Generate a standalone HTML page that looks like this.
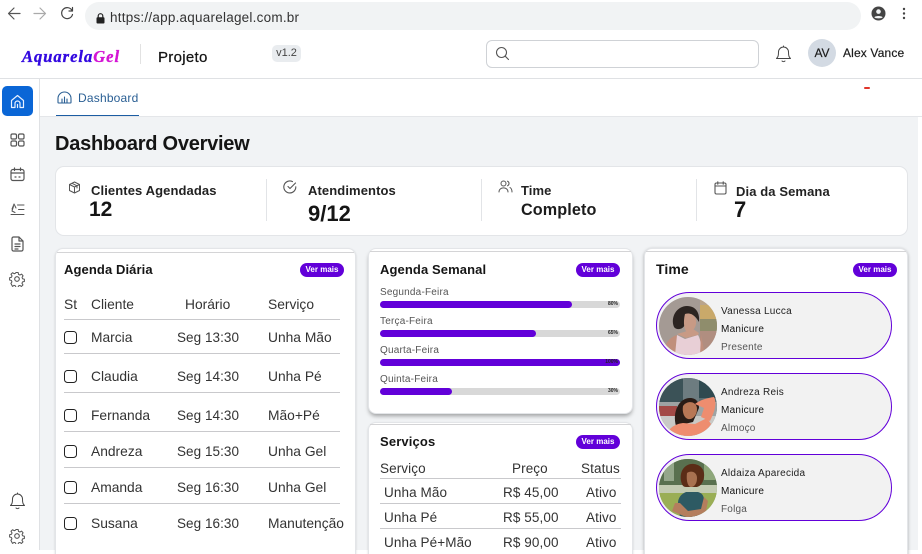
<!DOCTYPE html>
<html lang="pt-BR"><head><meta charset="utf-8"><title>Dashboard</title>
<style>
*{box-sizing:border-box;margin:0;padding:0}
html,body{width:922px;height:554px;overflow:hidden;background:#fff}
body{position:relative;font-family:"Liberation Sans",sans-serif;color:#222}
.a{position:absolute}
.t{position:absolute;white-space:nowrap;line-height:16px;height:16px}
.main{position:absolute;left:40px;top:117px;width:878px;height:433px;background:#f1f3f5}
.card{position:absolute;background:#fff;border:1px solid #e3e5e8;border-radius:8px}
.ln{position:absolute;height:1px;background:#c9c9cc}
.pill{position:absolute;width:44px;height:14px;border-radius:7px;background:#6200d9;color:#fff;font-size:8px;font-weight:bold;line-height:14px;text-align:center}
.h{font-weight:bold;font-size:13px;color:#151515;letter-spacing:.1px}
.r{font-size:13.8px;color:#333;margin-top:1px}
.g{font-size:13.5px;letter-spacing:.05px;color:#333;margin-top:1px}
.s{font-size:13.5px;color:#333;letter-spacing:.1px}
.cb{position:absolute;left:64px;width:13px;height:13px;border:1.4px solid #222;border-radius:3.5px;background:#fff}
.lab{font-size:10px;color:#555;letter-spacing:.2px}
.bar{position:absolute;left:380px;width:240px;height:7px;border-radius:4px;background:#d8d8d8}
.bar i{display:block;height:7px;border-radius:4px;background:#6200d9}
.pc{position:absolute;font-size:5px;font-weight:bold;color:#222;line-height:7px;right:2px;top:0}
.tm{position:absolute;left:656px;width:236px;height:67px;border:1.4px solid #6200d9;border-radius:34px;background:#f2f2f2}
.av{position:absolute;left:659px;width:58px;height:58px;border-radius:50%;overflow:hidden}
.av svg{display:block}
.n{font-size:10px;color:#222;letter-spacing:.25px}
.p{font-size:10px;color:#555;letter-spacing:.2px}
.k{font-size:13px;font-weight:bold;color:#222;letter-spacing:.1px}
.v{font-size:20px;font-weight:bold;color:#151515}
svg.i{position:absolute;fill:none;stroke:#555;stroke-width:1.200;stroke-linecap:round;stroke-linejoin:round}
</style></head><body>

<!-- browser bar -->
<div class="a" style="left:85px;top:2px;width:776px;height:28px;background:#f1f3f4;border-radius:14px"></div>
<svg class="i" style="left:7px;top:7px;stroke:#555" width="14" height="13" viewBox="0 0 14 13"><path d="M13 6.500H2M7 1L1.500 6.500 7 12"/></svg>
<svg class="i" style="left:33px;top:7px;stroke:#aaa" width="14" height="13" viewBox="0 0 14 13"><path d="M1 6.500H12M7 1l5.500 5.500L7 12"/></svg>
<svg class="i" style="left:60px;top:6px;stroke:#444" width="14" height="14" viewBox="0 0 14 14"><path d="M12 4.500A5.500 5.500 0 1 0 12.500 8.500M12.500 1.500v3.500H9"/></svg>
<svg class="a" style="left:96px;top:13px" width="9" height="11" viewBox="0 0 9 11"><path d="M2.200 4.500V3a2.300 2.300 0 0 1 4.600 0v1.500" fill="none" stroke="#222" stroke-width="1.200"/><rect x="0.500" y="4.300" width="8" height="6.200" rx="1" fill="#222"/></svg>
<div class="t" style="left:110px;top:10px;font-size:13.5px;color:#333;letter-spacing:.23px">https://app.aquarelagel.com.br</div>
<svg class="a" style="left:871px;top:6px" width="15" height="15" viewBox="0 0 15 15"><circle cx="7.500" cy="7.500" r="7" fill="#444"/><circle cx="7.500" cy="5.600" r="2.300" fill="#f1f3f4"/><path d="M3.300 11.300c1-1.800 7.400-1.800 8.400 0-1 1.500-7.400 1.500-8.400 0z" fill="#f1f3f4"/></svg>
<svg class="a" style="left:902px;top:7px" width="4" height="13" viewBox="0 0 4 13"><circle cx="2" cy="2" r="1.200" fill="#444"/><circle cx="2" cy="6.500" r="1.200" fill="#444"/><circle cx="2" cy="11" r="1.200" fill="#444"/></svg>

<!-- header -->
<div class="t" style="left:22px;top:49px;font:italic bold 16.500px/16px 'Liberation Serif',serif;letter-spacing:1px;color:#3208e0;-webkit-text-stroke:.35px #3208e0">Aquarela<span style="color:#d414d4;-webkit-text-stroke:.35px #d414d4">Gel</span></div>
<div class="a" style="left:140px;top:44px;width:1px;height:20px;background:#e2e2e2"></div>
<div class="t" style="left:158px;top:50px;font-size:15px;color:#151515;letter-spacing:.3px;-webkit-text-stroke:.25px #151515">Projeto</div>
<div class="a" style="left:272px;top:45px;width:29px;height:17px;background:#e9ecef;border-radius:5px;font-size:11px;line-height:16px;text-align:center;color:#444">v1.2</div>
<div class="a" style="left:486px;top:40px;width:273px;height:28px;border:1px solid #cfd2d6;border-radius:6px;background:#fff"></div>
<svg class="i" style="left:495px;top:46px;stroke:#555;stroke-width:1.100" width="15" height="15" viewBox="0 0 15 15"><circle cx="6.500" cy="6.500" r="5"/><path d="M10.200 10.200L13.500 13.500"/></svg>
<svg class="i" style="left:775px;top:45px;stroke:#444;stroke-width:1" width="17" height="18" viewBox="0 0 17 18"><path d="M1.500 13.500h14c-1.500-1.500-2-2.500-2-6.500a5 5 0 0 0-10 0c0 4-.5 5-2 6.500zM7 16c.8.800 2.200.800 3 0M8.500 2V1"/></svg>
<div class="a" style="left:808px;top:39px;width:28px;height:28px;border-radius:50%;background:#d3dae3;font-size:12px;line-height:28px;text-align:center;color:#1c1c1c;-webkit-text-stroke:.2px #1c1c1c">AV</div>
<div class="t" style="left:843px;top:45px;font-size:12px;color:#1c1c1c;letter-spacing:.15px;-webkit-text-stroke:.2px #1c1c1c">Alex Vance</div>
<div class="a" style="left:0;top:78px;width:922px;height:1px;background:#dfe1e4"></div>

<!-- sidebar -->
<div class="a" style="left:39px;top:79px;width:1px;height:471px;background:#dfe1e4"></div>
<div class="a" style="left:2px;top:86px;width:31px;height:30px;background:#0a66d6;border-radius:5px"></div>
<svg class="i" style="left:10px;top:94px;stroke:#e6f0ff" width="15" height="15" viewBox="0 0 15 15"><path d="M1.500 6.500L7.500 1.500l6 5v7h-3.500V9.500a2.500 2.500 0 0 0-5 0v4H1.500z"/><path d="M7.500 10.500v3"/></svg>
<svg class="i" style="left:10px;top:133px" width="15" height="14" viewBox="0 0 15 14"><rect x="1" y="1" width="5.500" height="5" rx="1.400"/><rect x="8.500" y="1" width="5.500" height="5" rx="1.400"/><rect x="1" y="8" width="5.500" height="5" rx="1.400"/><rect x="8.500" y="8" width="5.500" height="5" rx="1.400"/></svg>
<svg class="i" style="left:10px;top:167px" width="15" height="15" viewBox="0 0 15 15"><rect x="1" y="2.500" width="13" height="11" rx="2"/><path d="M1 6h13M4.500 1v2.500M10.500 1v2.500M5 10h1M9 10h1"/></svg>
<svg class="i" style="left:10px;top:202px;stroke-width:1" width="15" height="14" viewBox="0 0 15 14"><path d="M7.500 3h6.500M8.500 7.500h5.500M1 12.500h13M2 7l2-5 2 4M3.500 4.500L2 9l3 1.500"/></svg>
<svg class="i" style="left:11px;top:236px" width="13" height="16" viewBox="0 0 13 16"><path d="M1 2.500A1.500 1.500 0 0 1 2.500 1H8l4 4v8.500a1.500 1.500 0 0 1-1.500 1.500h-8A1.500 1.500 0 0 1 1 13.500zM8 1v4h4M4 8h5M4 10.500h5M4 13h3"/></svg>
<svg class="i" style="left:9px;top:271px;stroke-width:1.100" width="16" height="16" viewBox="0 0 16 16"><circle cx="8" cy="8" r="2.300"/><path d="M6.800 1h2.400l.4 2 1.500.7 1.800-1 1.600 1.800-1.100 1.700.5 1.500 2 .5v2.400l-2 .5-.6 1.500 1.100 1.700-1.700 1.700-1.700-1.100-1.500.6-.5 1.900H6.800l-.4-2-1.500-.6-1.800 1.100L1.400 12.700l1.100-1.700-.6-1.500-1.900-.5V6.600l2-.5.6-1.500-1.100-1.700L3.200 1.200 4.900 2.300l1.500-.6z" transform="translate(.6 .6) scale(.93)"/></svg>
<svg class="i" style="left:9px;top:492px;stroke:#444;stroke-width:1" width="17" height="18" viewBox="0 0 17 18"><path d="M1.500 13.500h14c-1.500-1.500-2-2.500-2-6.500a5 5 0 0 0-10 0c0 4-.5 5-2 6.500zM7 16c.8.800 2.200.800 3 0M8.500 2V1"/></svg>
<svg class="i" style="left:9px;top:528px;stroke-width:1.100" width="16" height="16" viewBox="0 0 16 16"><circle cx="8" cy="8" r="2.300"/><path d="M6.800 1h2.400l.4 2 1.500.7 1.800-1 1.600 1.800-1.100 1.700.5 1.500 2 .5v2.400l-2 .5-.6 1.500 1.100 1.700-1.700 1.700-1.700-1.100-1.500.6-.5 1.900H6.800l-.4-2-1.500-.6-1.800 1.100L1.400 12.700l1.100-1.700-.6-1.500-1.900-.5V6.600l2-.5.6-1.500-1.100-1.700L3.200 1.200 4.900 2.300l1.500-.6z" transform="translate(.6 .6) scale(.93)"/></svg>

<!-- tabs -->
<svg class="i" style="left:57px;top:91px;stroke:#2a5f94;stroke-width:1.100" width="15" height="13" viewBox="0 0 15 13"><path d="M1 11.500V7.500a6.500 6.500 0 0 1 13 0v4a.5.5 0 0 1-.5.500h-12a.5.5 0 0 1-.5-.500zM5 12V8M7.500 12V6M10 12V8"/></svg>
<div class="t" style="left:78px;top:90px;font-size:12px;color:#2a5f94;letter-spacing:.2px">Dashboard</div>
<div class="a" style="left:56px;top:115px;width:83px;height:2px;background:#1c5da3"></div>

<!-- main -->
<div class="main"></div>
<div class="a" style="left:40px;top:116px;width:882px;height:1px;background:#e4e6e9"></div>
<div class="t" style="left:55px;top:132px;height:24px;line-height:24px;font-size:20px;font-weight:bold;color:#151515;letter-spacing:-.25px">Dashboard Overview</div>

<!-- KPI -->
<div class="card" style="left:55px;top:166px;width:853px;height:70px;border-radius:9px"></div>
<div class="a" style="left:266px;top:179px;width:1px;height:42px;background:#e2e4e7"></div>
<div class="a" style="left:481px;top:179px;width:1px;height:42px;background:#e2e4e7"></div>
<div class="a" style="left:696px;top:179px;width:1px;height:42px;background:#e2e4e7"></div>
<svg class="i" style="left:68px;top:181px;stroke-width:1" width="13" height="13" viewBox="0 0 13 13"><path d="M6.500 1L11.500 3.500v6L6.500 12 1.500 9.500v-6zM1.500 3.500L6.500 6l5-2.500M6.500 6v6M4 2.300l5 2.500V7"/></svg>
<div class="t k" style="left:91px;top:183px">Clientes Agendadas</div>
<div class="t v" style="left:89px;top:201px;height:18px;line-height:18px;font-size:21px">12</div>
<svg class="i" style="left:283px;top:180px;stroke-width:1.100" width="14" height="14" viewBox="0 0 14 14"><path d="M12.800 6.800A6 6 0 1 1 9.500 1.600M5 6.500l2 2 5.500-5.500"/></svg>
<div class="t k" style="left:308px;top:183px">Atendimentos</div>
<div class="t v" style="left:308px;top:205px;height:18px;line-height:18px;font-size:22px">9/12</div>
<svg class="i" style="left:498px;top:180px;stroke-width:1" width="15" height="13" viewBox="0 0 15 13"><circle cx="5.500" cy="3.500" r="2.500"/><path d="M1 12c0-5.500 9-5.500 9 0M9.500 1.200a2.500 2.500 0 0 1 0 4.600M12 7.500c1.300.8 2 2.500 2 4.500"/></svg>
<div class="t k" style="left:521px;top:183px">Time</div>
<div class="t" style="left:521px;top:201px;height:18px;line-height:18px;font-size:16.200px;font-weight:bold;color:#1c1c1c;letter-spacing:.1px">Completo</div>
<svg class="i" style="left:714px;top:181px;stroke-width:1.100" width="13" height="14" viewBox="0 0 13 14"><rect x="1" y="2" width="11" height="11" rx="1.500"/><path d="M1 5h11M3.800 .8v2.400M9.200 .8v2.400"/></svg>
<div class="t k" style="left:736px;top:184px">Dia da Semana</div>
<div class="t v" style="left:734px;top:201px;height:18px;line-height:18px;font-size:22px">7</div>

<!-- Agenda Diaria -->
<div class="card" style="left:55px;top:248px;width:301px;height:320px;box-shadow:0 1px 2px rgba(0,0,0,.15)"></div>
<div class="ln" style="left:57px;top:252px;width:297px;background:#d4d4d6"></div>
<div class="t h" style="left:64px;top:262px">Agenda Diária</div>
<div class="pill" style="left:300px;top:263px">Ver mais</div>
<div class="t r" style="left:64px;top:296px">St</div>
<div class="t r" style="left:91px;top:296px">Cliente</div>
<div class="t r" style="left:185px;top:296px">Horário</div>
<div class="t r" style="left:268px;top:296px">Serviço</div>
<div class="ln" style="left:64px;top:319px;width:276px"></div>
<div class="cb" style="top:331px"></div><div class="t r" style="left:91px;top:329px">Marcia</div><div class="t g" style="left:177px;top:329px">Seg 13:30</div><div class="t r" style="left:268px;top:329px">Unha Mão</div>
<div class="ln" style="left:64px;top:353px;width:276px"></div>
<div class="cb" style="top:370px"></div><div class="t r" style="left:91px;top:368px">Claudia</div><div class="t g" style="left:177px;top:368px">Seg 14:30</div><div class="t r" style="left:268px;top:368px">Unha Pé</div>
<div class="ln" style="left:64px;top:392px;width:276px"></div>
<div class="cb" style="top:409px"></div><div class="t r" style="left:91px;top:407px">Fernanda</div><div class="t g" style="left:177px;top:407px">Seg 14:30</div><div class="t r" style="left:268px;top:407px">Mão+Pé</div>
<div class="ln" style="left:64px;top:431px;width:276px"></div>
<div class="cb" style="top:445px"></div><div class="t r" style="left:91px;top:443px">Andreza</div><div class="t g" style="left:177px;top:443px">Seg 15:30</div><div class="t r" style="left:268px;top:443px">Unha Gel</div>
<div class="ln" style="left:64px;top:467px;width:276px"></div>
<div class="cb" style="top:481px"></div><div class="t r" style="left:91px;top:479px">Amanda</div><div class="t g" style="left:177px;top:479px">Seg 16:30</div><div class="t r" style="left:268px;top:479px">Unha Gel</div>
<div class="ln" style="left:64px;top:503px;width:276px"></div>
<div class="cb" style="top:517px"></div><div class="t r" style="left:91px;top:515px">Susana</div><div class="t g" style="left:177px;top:515px">Seg 16:30</div><div class="t r" style="left:268px;top:515px">Manutenção</div>

<!-- Agenda Semanal -->
<div class="card" style="left:368px;top:248px;width:265px;height:166px;box-shadow:0 3px 4px -1px rgba(0,0,0,.35)"></div>
<div class="ln" style="left:370px;top:251px;width:261px;background:#d4d4d6"></div>
<div class="t h" style="left:380px;top:262px">Agenda Semanal</div>
<div class="pill" style="left:576px;top:263px">Ver mais</div>
<div class="t lab" style="left:380px;top:285px">Segunda-Feira</div>
<div class="bar" style="top:301px"><i style="width:192px"></i><span class="pc">80%</span></div>
<div class="t lab" style="left:380px;top:314px">Terça-Feira</div>
<div class="bar" style="top:330px"><i style="width:156px"></i><span class="pc">65%</span></div>
<div class="t lab" style="left:380px;top:343px">Quarta-Feira</div>
<div class="bar" style="top:359px"><i style="width:240px"></i><span class="pc">100%</span></div>
<div class="t lab" style="left:380px;top:372px">Quinta-Feira</div>
<div class="bar" style="top:388px"><i style="width:72px"></i><span class="pc">30%</span></div>

<!-- Servicos -->
<div class="card" style="left:368px;top:422px;width:265px;height:150px;box-shadow:0 1px 2px rgba(0,0,0,.15)"></div>
<div class="ln" style="left:370px;top:424px;width:261px;background:#d4d4d6"></div>
<div class="t h" style="left:380px;top:434px;letter-spacing:.15px">Serviços</div>
<div class="pill" style="left:576px;top:435px">Ver mais</div>
<div class="t s" style="left:380px;top:461px">Serviço</div><div class="t s" style="left:512px;top:461px">Preço</div><div class="t s" style="left:581px;top:461px">Status</div>
<div class="ln" style="left:380px;top:478px;width:241px"></div>
<div class="t s" style="left:384px;top:485px">Unha Mão</div><div class="t s" style="left:503px;top:485px">R$ 45,00</div><div class="t s" style="left:586px;top:485px">Ativo</div>
<div class="ln" style="left:380px;top:503px;width:241px"></div>
<div class="t s" style="left:384px;top:510px">Unha Pé</div><div class="t s" style="left:503px;top:510px">R$ 55,00</div><div class="t s" style="left:586px;top:510px">Ativo</div>
<div class="ln" style="left:380px;top:528px;width:241px"></div>
<div class="t s" style="left:384px;top:535px">Unha Pé+Mão</div><div class="t s" style="left:503px;top:535px">R$ 90,00</div><div class="t s" style="left:586px;top:535px">Ativo</div>

<!-- Time -->
<div class="card" style="left:644px;top:248px;width:264px;height:320px;box-shadow:0 1px 3px rgba(0,0,0,.3)"></div>
<div class="ln" style="left:646px;top:251px;width:260px;background:#d4d4d6"></div>
<div class="t h" style="left:656px;top:261px;font-size:14px;font-weight:bold;letter-spacing:.1px">Time</div>
<div class="pill" style="left:853px;top:263px">Ver mais</div>

<div class="tm" style="top:292px"></div>
<div class="av" style="top:297px"><svg width="58" height="58" viewBox="0 0 58 58"><rect width="58" height="58" fill="#a49a94"/><rect x="41" width="17" height="58" fill="#b9a48c"/><rect x="41" y="8" width="17" height="14" fill="#c9a96a"/><rect x="41" y="22" width="17" height="12" fill="#8f8d6c"/><rect x="41" y="34" width="17" height="24" fill="#b08e80"/><path d="M15 30C11 20 18 9 28 9c9 0 13 7 12 16-3-5-6-8-10-8-3 2-4 5-4 10-1 5-8 7-11 3z" fill="#2c2421"/><path d="M26 17c7-2 12 3 11 10-1 6-6 9-9 8-3-2-4-10-2-18z" fill="#c89a85"/><path d="M14 58c-1-10 1-16 4-20l8 4 13-4c3 5 4 14 3 20z" fill="#e8cfd6"/><path d="M5 58c0-10 4-17 13-20l-2 20zM42 38l4 20h-5z" fill="#c08f7c"/><path d="M18 37l9 4 12-3 1-2-6-4-9 3z" fill="#c89a85"/></svg></div>
<div class="t n" style="left:721px;top:304px">Vanessa Lucca</div>
<div class="t n" style="left:721px;top:322px;color:#111">Manicure</div>
<div class="t p" style="left:721px;top:340px">Presente</div>

<div class="tm" style="top:373px"></div>
<div class="av" style="top:378px"><svg width="58" height="58" viewBox="0 0 58 58"><rect width="58" height="58" fill="#5b6e72"/><rect x="0" width="24" height="24" fill="#3b5257"/><rect x="24" width="16" height="26" fill="#6d7c80"/><rect x="40" width="18" height="20" fill="#2f4a50"/><rect y="24" width="58" height="14" fill="#9ea3a3"/><rect y="28" width="18" height="10" fill="#a34a46"/><rect y="38" width="58" height="20" fill="#c9c9c6"/><path d="M17 48c-4-14 3-28 14-28 7 0 9 5 9 10l-6 14z" fill="#2a1c16"/><path d="M24 28c4-6 14-5 14 3 0 7-5 11-9 10-4-1-6-7-5-13z" fill="#b87755"/><path d="M36 26c5-4 12-6 19-7 3 6 1 14-4 24l-9-4 3-9z" fill="#ee8d6f"/><path d="M8 58c1-8 8-12 16-13l12 1 12-6 4 6-8 12z" fill="#ee8d6f"/></svg></div>
<div class="t n" style="left:721px;top:385px">Andreza Reis</div>
<div class="t n" style="left:721px;top:403px;color:#111">Manicure</div>
<div class="t p" style="left:721px;top:421px">Almoço</div>

<div class="tm" style="top:454px"></div>
<div class="av" style="top:459px"><svg width="58" height="58" viewBox="0 0 58 58"><rect width="58" height="58" fill="#6f8a58"/><rect y="0" width="58" height="26" fill="#59704f"/><rect x="5" y="2" width="10" height="20" fill="#94a68a"/><rect x="45" y="5" width="13" height="16" fill="#8ea77a"/><rect y="26" width="58" height="8" fill="#c3cbb2"/><rect y="34" width="58" height="24" fill="#9aae55"/><path d="M22 22c-2-12 6-18 13-17 9 1 12 9 9 17-2 5-5 6-7 6H27c-3 0-4-2-5-6z" fill="#5b2d17"/><path d="M28 14c4-3 10-1 10 5 0 6-3 9-6 9-3 0-5-6-4-14z" fill="#a87150"/><path d="M21 58l-2-14c0-5 3-9 8-11l12 0c4 1 6 4 6 8l-3 17z" fill="#2d5a63"/><path d="M16 44l-3 8 14 6h14l6-6 2-10-4-4-3 12-13 2-8-8z" fill="#b47e5e"/></svg></div>
<div class="t n" style="left:721px;top:466px">Aldaiza Aparecida</div>
<div class="t n" style="left:721px;top:484px;color:#111">Manicure</div>
<div class="t p" style="left:721px;top:502px">Folga</div>

<div class="a" style="left:864px;top:87px;width:6px;height:2px;border-radius:1px;background:#e0352b"></div>
</body></html>
